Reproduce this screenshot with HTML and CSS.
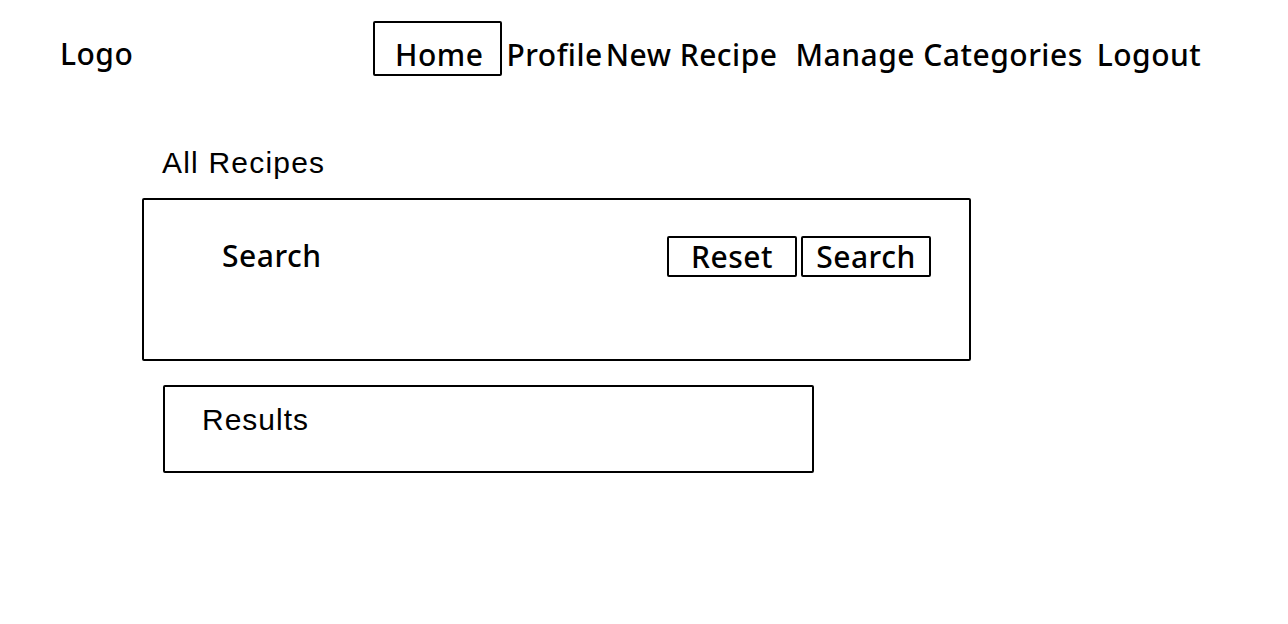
FILE: index.html
```html
<!DOCTYPE html>
<html lang="en">

<head>
    <meta charset="UTF-8">
    <meta name="viewport" content="width=device-width, initial-scale=1.0">
    <title>All Recipes</title>

    <link rel="stylesheet" href="styles.css">
</head>

<body>
    <header class="topbar">
        <div class="logo">Logo</div>
        <nav class="menu">
            <a class="menu-item active" href="#">Home</a>
            <a class="menu-item" href="#">Profile</a>
            <a class="menu-item recipe" href="#">New Recipe</a>
            <a class="menu-item wide" href="#">Manage Categories</a>
            <a class="menu-item" href="#">Logout</a>
        </nav>
    </header>

    <main class="page">
        <h1 class="title">All Recipes</h1>

        <section class="search-panel">
            <p class="search-label">Search</p>
            <div class="actions">
                <button class="btn">Reset</button>
                <button class="btn">Search</button>
            </div>
        </section>

        <section class="results">
            <p class="results-label">Results</p>
        </section>
    </main>
</body>

</html>
```

FILE: styles.css
```css
* {
    box-sizing: border-box;
    margin: 0;
    padding: 0;
}

body {
    background: #fff;
    color: #000;
    font-family: "Noto Sans", sans-serif;
    font-weight: 500;
    letter-spacing: 0.5px;
}

.topbar {
    display: flex;
    align-items: center;
    padding: 21px 0 0 60px;
    height: 76px;
}

.logo {
    width: 313px;
    font-size: 30px;
    line-height: 1;
    padding-top: 10px;
}

.menu {
    display: flex;
    align-items: flex-end;
}

.menu-item {
    color: #000;
    text-decoration: none;
    font-size: 30px;
    line-height: 1;
    margin-right: 3px;
    padding-bottom: 6px;
}

.menu-item.recipe {
    margin-right: 18px;
}

.menu-item.wide {
    margin-right: 14px;
}

.menu-item.active {
    border: 2px solid #000;
    border-radius: 2px;
    padding: 17px 17px 4px 20px;
    margin-right: 4px;
}

.page {
    padding: 70px 0 0 142px;
}

.title {
    font-family: "Liberation Sans", Arial, sans-serif;
    font-weight: normal;
    font-size: 30px;
    letter-spacing: 1.2px;
    margin-left: 20px;
    height: 52px;
}

.search-panel {
    width: 829px;
    height: 163px;
    border: 2px solid #000;
    border-radius: 2px;
    display: flex;
    justify-content: space-between;
    align-items: flex-start;
    padding: 36px 38px 0 78px;
}

.search-label {
    font-size: 30px;
    line-height: 1;
    padding-top: 5px;
}

.actions {
    display: flex;
    gap: 4px;
}

.btn {
    width: 130px;
    height: 41px;
    background: #fff;
    border: 2px solid #000;
    border-radius: 2px;
    font-family: "Noto Sans", sans-serif;
    font-weight: 500;
    font-size: 30px;
    letter-spacing: 0.5px;
    line-height: 1;
    color: #000;
}

.results {
    width: 651px;
    height: 88px;
    margin: 24px 0 0 21px;
    border: 2px solid #000;
    border-radius: 2px;
    padding: 16px 0 0 37px;
}

.results-label {
    font-family: "Liberation Sans", Arial, sans-serif;
    font-size: 30px;
    letter-spacing: 1px;
}
```
